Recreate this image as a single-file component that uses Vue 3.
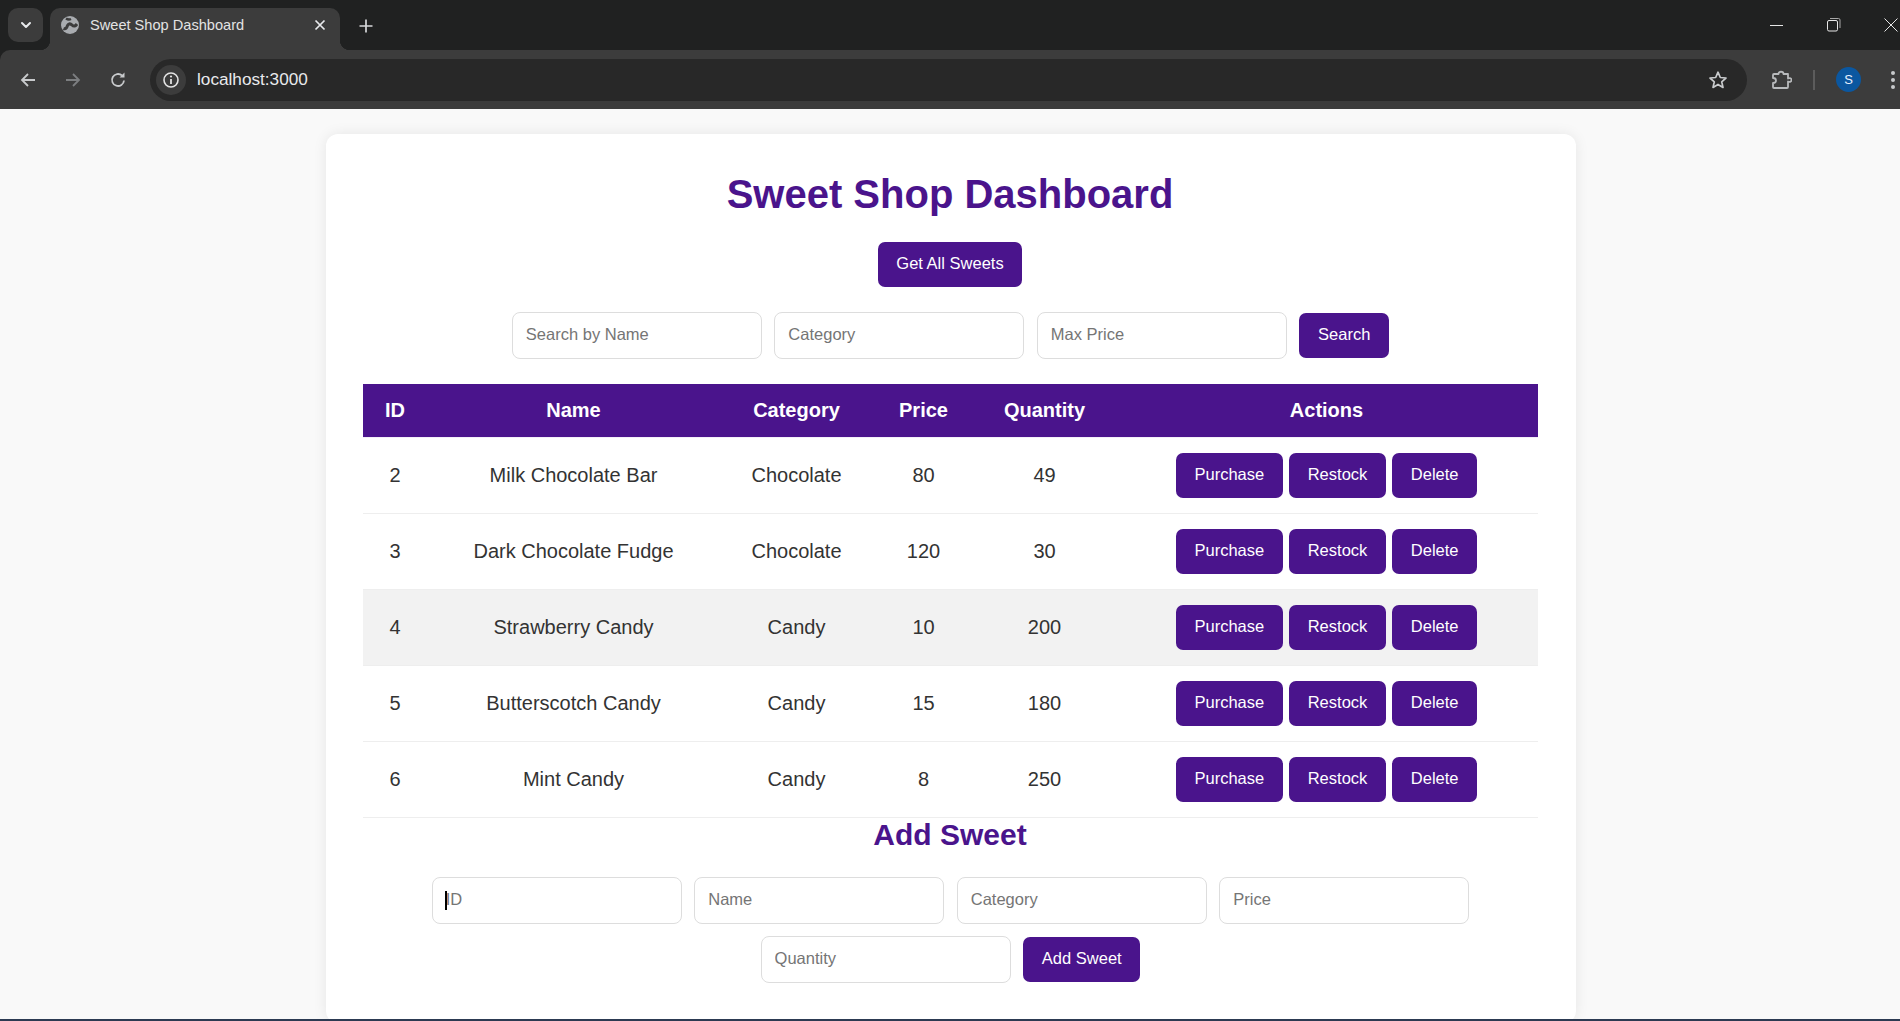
<script setup>
const sweets = [
  { id: 2, name: 'Milk Chocolate Bar', category: 'Chocolate', price: 80, quantity: 49 },
  { id: 3, name: 'Dark Chocolate Fudge', category: 'Chocolate', price: 120, quantity: 30 },
  { id: 4, name: 'Strawberry Candy', category: 'Candy', price: 10, quantity: 200 },
  { id: 5, name: 'Butterscotch Candy', category: 'Candy', price: 15, quantity: 180 },
  { id: 6, name: 'Mint Candy', category: 'Candy', price: 8, quantity: 250 },
]

const columns = ['ID', 'Name', 'Category', 'Price', 'Quantity', 'Actions']
const actions = ['Purchase', 'Restock', 'Delete']
const hoveredId = 4
</script>

<template>
  <div class="window">
    <header class="chrome">
      <div class="tabstrip">
        <button type="button" class="tab-search" aria-label="Search tabs">
          <svg width="14" height="14" viewBox="0 0 14 14" fill="none">
            <path d="M3 5l4 4 4-4" stroke="#e8eaed" stroke-width="2" stroke-linecap="round" stroke-linejoin="round" />
          </svg>
        </button>
        <div class="tab">
          <svg class="tab__favicon" width="18" height="18" viewBox="0 0 18 18" fill="none">
            <circle cx="9" cy="9" r="9" fill="#a9acb0" />
            <path d="M2.500 12.500C5 13.500 6 11 6.500 9.500S9 7 11 9s3.500 1 5-1" stroke="#3c3c3c" stroke-width="3" />
            <path d="M5 2.500c1.500 1 3 1.500 5 .5" stroke="#3c3c3c" stroke-width="2.400" />
          </svg>
          <span class="tab__title">Sweet Shop Dashboard</span>
          <svg class="tab__close" width="12" height="12" viewBox="0 0 12 12">
            <path d="M1.500 1.500l9 9M10.500 1.500l-9 9" stroke="#e8eaed" stroke-width="1.700" />
          </svg>
        </div>
        <svg class="new-tab" width="14" height="14" viewBox="0 0 14 14">
          <path d="M7 .5v13M.5 7h13" stroke="#d6d8da" stroke-width="1.700" />
        </svg>
        <div class="window-controls">
          <svg width="14" height="14" viewBox="0 0 14 14"><path d="M0 7.500h13" stroke="#e6e6e6" stroke-width="1" /></svg>
          <svg width="14" height="14" viewBox="0 0 14 14" fill="none">
            <rect x=".5" y="2.500" width="10" height="10.500" rx="1.500" stroke="#e6e6e6" />
            <path d="M3 .5h8.500A1.500 1.500 0 0 1 13 2v8" stroke="#a8a8a8" />
          </svg>
          <svg width="14" height="14" viewBox="0 0 14 14"><path d="M.5.500l13 13M13.500.500l-13 13" stroke="#e6e6e6" stroke-width="1" /></svg>
        </div>
      </div>

      <div class="toolbar">
        <svg class="nav-icon" width="18" height="18" viewBox="0 0 18 18" fill="none">
          <path d="M16 9H3M9 3L3 9l6 6" stroke="#c8cacc" stroke-width="1.800" />
        </svg>
        <svg class="nav-icon" width="18" height="18" viewBox="0 0 18 18" fill="none">
          <path d="M2 9h13M9 3l6 6-6 6" stroke="#7c7e80" stroke-width="1.800" />
        </svg>
        <svg class="nav-icon" width="18" height="18" viewBox="0 0 18 18" fill="none">
          <path d="M15 9.500A6 6 0 1 1 13 4.500" stroke="#c8cacc" stroke-width="1.800" />
          <path d="M15.500 1.500v5h-5z" fill="#c8cacc" />
        </svg>
        <div class="omnibox">
          <span class="omnibox__info">
            <svg width="18" height="18" viewBox="0 0 18 18" fill="none">
              <circle cx="9" cy="9" r="7" stroke="#e3e3e3" stroke-width="1.600" />
              <path d="M9 8v5" stroke="#e3e3e3" stroke-width="1.800" />
              <circle cx="9" cy="5.500" r="1.100" fill="#e3e3e3" />
            </svg>
          </span>
          <span class="omnibox__url">localhost:3000</span>
          <svg class="omnibox__star" width="20" height="20" viewBox="0 0 20 20" fill="none">
            <path d="M10 2.200l2.300 5.300 5.700.5-4.300 3.800 1.300 5.600-5-3-5 3 1.300-5.600L2 8l5.700-.5z" stroke="#c8cacc" stroke-width="1.700" stroke-linejoin="round" />
          </svg>
        </div>
        <svg class="extensions" width="22" height="22" viewBox="0 0 22 22" fill="none">
          <path d="M4 5h4.500c0-3 5-3 5 0H18v4.500c2-1 3.500 0 3.500 1.500s-1.500 2.500-3.500 1.500V18a1 1 0 0 1-1 1H4a1 1 0 0 1-1-1v-4c2 0 3-1 3-2.500S5 9 3 9V6a1 1 0 0 1 1-1z" stroke="#b8babc" stroke-width="1.800" stroke-linejoin="round" />
        </svg>
        <span class="toolbar__divider"></span>
        <span class="avatar">S</span>
        <span class="menu-dots"><i></i><i></i><i></i></span>
      </div>
    </header>

    <main class="page">
      <section class="card">
        <h1 class="card__title">Sweet Shop Dashboard</h1>

        <div class="card__get-all">
          <button type="button" class="btn">Get All Sweets</button>
        </div>

        <form class="field-row field-row--search" @submit.prevent>
          <input class="field" type="text" placeholder="Search by Name" />
          <input class="field" type="text" placeholder="Category" />
          <input class="field" type="text" placeholder="Max Price" />
          <button type="button" class="btn">Search</button>
        </form>

        <table class="sweets">
          <colgroup>
            <col class="col-id" />
            <col class="col-name" />
            <col class="col-category" />
            <col class="col-price" />
            <col class="col-quantity" />
            <col class="col-actions" />
          </colgroup>
          <thead>
            <tr>
              <th v-for="col in columns" :key="col">{{ col }}</th>
            </tr>
          </thead>
          <tbody>
            <tr v-for="sweet in sweets" :key="sweet.id" :class="{ 'is-hovered': sweet.id === hoveredId }">
              <td>{{ sweet.id }}</td>
              <td>{{ sweet.name }}</td>
              <td>{{ sweet.category }}</td>
              <td>{{ sweet.price }}</td>
              <td>{{ sweet.quantity }}</td>
              <td>
                <div class="sweets__actions">
                  <button v-for="action in actions" :key="action" type="button" class="btn">{{ action }}</button>
                </div>
              </td>
            </tr>
          </tbody>
        </table>

        <h2 class="card__subtitle">Add Sweet</h2>

        <form class="field-row" @submit.prevent>
          <span class="field-wrap">
            <input class="field" type="text" placeholder="ID" />
            <span class="field-caret"></span>
          </span>
          <input class="field" type="text" placeholder="Name" />
          <input class="field" type="text" placeholder="Category" />
          <input class="field" type="text" placeholder="Price" />
          <input class="field" type="text" placeholder="Quantity" />
          <button type="button" class="btn">Add Sweet</button>
        </form>
      </section>
    </main>
    <div class="taskbar-edge"></div>
  </div>
</template>

<style>
html,
body {
  margin: 0;
  height: 100%;
  overflow: hidden;
  background: #f9f9f9;
}
</style>

<style scoped>
.window {
  display: flex;
  flex-direction: column;
  height: 1021px;
  font-family: 'Liberation Sans', Arial, sans-serif;
  overflow: hidden;
}

/* browser frame */
.chrome {
  flex-shrink: 0;
  background: #202121;
}

.tabstrip {
  display: flex;
  align-items: flex-start;
  height: 50px;
  padding-left: 8px;
}

.tab-search {
  display: flex;
  align-items: center;
  justify-content: center;
  width: 35px;
  height: 34px;
  margin-top: 8px;
  padding: 0;
  border: none;
  border-radius: 10px;
  background: #3c3c3c;
}

.tab {
  position: relative;
  display: flex;
  align-items: center;
  width: 290px;
  height: 42px;
  margin: 8px 0 0 7px;
  padding: 0 14px 8px 11px;
  box-sizing: border-box;
  border-radius: 10px 10px 0 0;
  background: #3c3c3c;
}

.tab::before,
.tab::after {
  content: '';
  position: absolute;
  bottom: 0;
  width: 10px;
  height: 10px;
}

.tab::before {
  left: -10px;
  background: radial-gradient(circle at 0 0, transparent 10px, #3c3c3c 10.500px);
}

.tab::after {
  right: -10px;
  background: radial-gradient(circle at 100% 0, transparent 10px, #3c3c3c 10.500px);
}

.tab__favicon {
  flex-shrink: 0;
}

.tab__title {
  flex: 1;
  margin-left: 11px;
  font-size: 14.600px;
  color: #e3e3e3;
  white-space: nowrap;
}

.new-tab {
  margin: 19px 0 0 19px;
}

.window-controls {
  display: flex;
  gap: 43px;
  margin: 18px 2px 0 auto;
}

.toolbar {
  display: flex;
  align-items: center;
  height: 59px;
  padding: 0 0 0 19px;
  box-sizing: border-box;
  border-radius: 10px 0 0 0;
  background: #3c3c3c;
}

.nav-icon {
  flex-shrink: 0;
  margin-right: 27px;
}

.nav-icon:nth-of-type(3) {
  margin-right: 20px;
}

.omnibox {
  display: flex;
  flex: 0 0 1597px;
  align-items: center;
  height: 42px;
  margin-left: 3px;
  padding: 0 19px 0 6px;
  box-sizing: border-box;
  border-radius: 21px;
  background: #282828;
}

.omnibox__info {
  display: flex;
  align-items: center;
  justify-content: center;
  width: 30px;
  height: 30px;
  border-radius: 50%;
  background: #3c3c3c;
}

.omnibox__url {
  flex: 1;
  margin-left: 11px;
  font-size: 17.200px;
  color: #e8eaed;
}

.extensions {
  flex-shrink: 0;
  margin-left: 23px;
}

.toolbar__divider {
  flex-shrink: 0;
  width: 2px;
  height: 20px;
  margin-left: 21px;
  background: #5c5c5c;
}

.avatar {
  display: flex;
  flex-shrink: 0;
  align-items: center;
  justify-content: center;
  width: 25px;
  height: 25px;
  margin-left: 21px;
  border-radius: 50%;
  background: #0b57a0;
  color: #e8f0fe;
  font-size: 13px;
}

.menu-dots {
  display: flex;
  flex-direction: column;
  gap: 3px;
  margin-left: 30px;
}

.menu-dots i {
  display: block;
  width: 4px;
  height: 4px;
  border-radius: 50%;
  background: #c8cacc;
}

/* page */
.page {
  flex: 1;
  min-height: 0;
  overflow: hidden;
  padding: 25px 0 0 1px;
  background: #f9f9f9;
}

.card {
  box-sizing: border-box;
  width: 1250px;
  margin: 0 auto;
  padding: 37px 38px 40px 37px;
  border-radius: 12px;
  background: #fff;
  box-shadow: 0 0 14px rgba(0, 0, 0, 0.08);
}

.card__title {
  margin: 0 0 24px;
  font-size: 40px;
  font-weight: 700;
  line-height: 47px;
  text-align: center;
  color: #4a148c;
}

.card__get-all {
  display: flex;
  justify-content: center;
  margin-bottom: 25px;
}

.btn {
  height: 45px;
  padding: 0 18.750px 2px;
  border: none;
  border-radius: 7px;
  background: #4a148c;
  color: #fff;
  font-family: inherit;
  font-size: 16.500px;
  white-space: nowrap;
}

.field-row {
  display: flex;
  flex-wrap: wrap;
  align-items: center;
  justify-content: center;
  gap: 12px 12.500px;
  margin-left: 1px;
}

.field-row--search {
  margin-bottom: 25px;
}

.field {
  box-sizing: border-box;
  display: block;
  width: 250px;
  height: 47px;
  padding: 0 13px 2px;
  border: 1px solid #ddd;
  border-radius: 8px;
  background: #fff;
  color: #333;
  font-family: inherit;
  font-size: 16.500px;
}

.field::placeholder {
  color: #757575;
  opacity: 1;
}

.field-wrap {
  position: relative;
  display: block;
}

.field-caret {
  position: absolute;
  top: 14px;
  left: 13px;
  width: 2px;
  height: 19px;
  background: #000;
}

.sweets {
  width: 100%;
  table-layout: fixed;
  border-collapse: separate;
  border-spacing: 0;
}

.col-id { width: 65px; }
.col-name { width: 292px; }
.col-category { width: 154px; }
.col-price { width: 100px; }
.col-quantity { width: 142px; }

.sweets th {
  height: 53px;
  padding: 0;
  border-bottom: 1px solid #f3eef8;
  background: #4a148c;
  background-clip: padding-box;
  color: #fff;
  font-size: 20px;
  font-weight: 700;
  text-align: center;
}

.sweets td {
  height: 75px;
  padding: 0;
  border-bottom: 1px solid #eee;
  color: #333;
  font-size: 20px;
  text-align: center;
}

.sweets tr.is-hovered td {
  background: #f2f2f2;
}

.sweets__actions {
  display: flex;
  justify-content: center;
  gap: 6px;
}

.card__subtitle {
  margin: 0 0 25px;
  font-size: 30px;
  font-weight: 700;
  line-height: 34px;
  text-align: center;
  color: #4a148c;
}

.taskbar-edge {
  flex-shrink: 0;
  height: 2px;
  background: #2c3a52;
}
</style>
